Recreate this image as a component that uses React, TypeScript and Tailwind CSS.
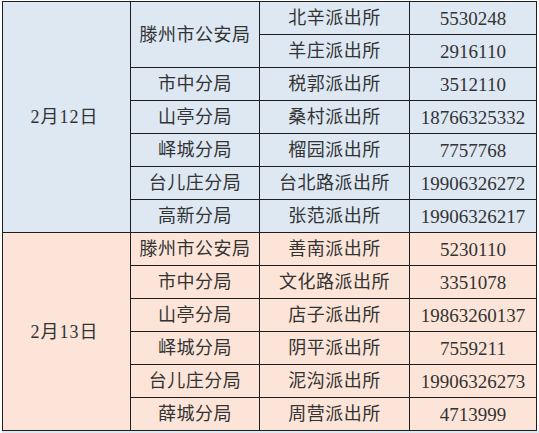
const groups = [
  {
    date: '2月12日',
    bg: 'bg-[#dde8f3]',
    rows: [
      ['滕州市公安局', '北辛派出所', '5530248'],
      ['', '羊庄派出所', '2916110'],
      ['市中分局', '税郭派出所', '3512110'],
      ['山亭分局', '桑村派出所', '18766325332'],
      ['峄城分局', '榴园派出所', '7757768'],
      ['台儿庄分局', '台北路派出所', '19906326272'],
      ['高新分局', '张范派出所', '19906326217'],
    ],
  },
  {
    date: '2月13日',
    bg: 'bg-[#fce5d8]',
    rows: [
      ['滕州市公安局', '善南派出所', '5230110'],
      ['市中分局', '文化路派出所', '3351078'],
      ['山亭分局', '店子派出所', '19863260137'],
      ['峄城分局', '阴平派出所', '7559211'],
      ['台儿庄分局', '泥沟派出所', '19906326273'],
      ['薛城分局', '周营派出所', '4713999'],
    ],
  },
];

function Cell({ children, className = '' }: { children?: React.ReactNode; className?: string }) {
  return (
    <div className={`flex items-center justify-center text-[18px] leading-none text-[#333] ${className}`}>
      {children}
    </div>
  );
}

export default function App() {
  return (
    <div
      className="w-[539px] h-[433px] bg-white overflow-hidden"
      style={{ fontFamily: '"Liberation Serif", "Noto Sans CJK SC", serif' }}
    >
      <div className="ml-[2px] mt-[1px] grid w-[535px] grid-cols-[127px_128px_149px_126px] auto-rows-[32px] gap-px bg-[#1e1e1e] p-px">
        {groups.map((g, gi) => (
          <div key={gi} className="contents">
            {/* date cell covers every row of the day */}
            <div
              className={`${g.bg} flex items-center justify-center text-[18px] leading-none text-[#333] tracking-[1px]`}
              style={{ gridRow: `span ${g.rows.length}` }}
            >
              <span className="pr-[4px]">{g.date}</span>
            </div>
            {g.rows.map((r, ri) => (
              <div key={ri} className="contents">
                {r[0] !== '' && (
                  <Cell className={`${g.bg} tracking-[0.5px] ${gi === 0 && ri === 0 ? 'row-span-2' : ''}`}>
                    {r[0]}
                  </Cell>
                )}
                <Cell className={`${g.bg} tracking-[0.5px]`}>{r[1]}</Cell>
                <Cell className={`${g.bg} text-[19px]`}>{r[2]}</Cell>
              </div>
            ))}
          </div>
        ))}
      </div>
      <div className="ml-[2px] h-[2px] bg-[#dde8f3]" />
    </div>
  );
}
